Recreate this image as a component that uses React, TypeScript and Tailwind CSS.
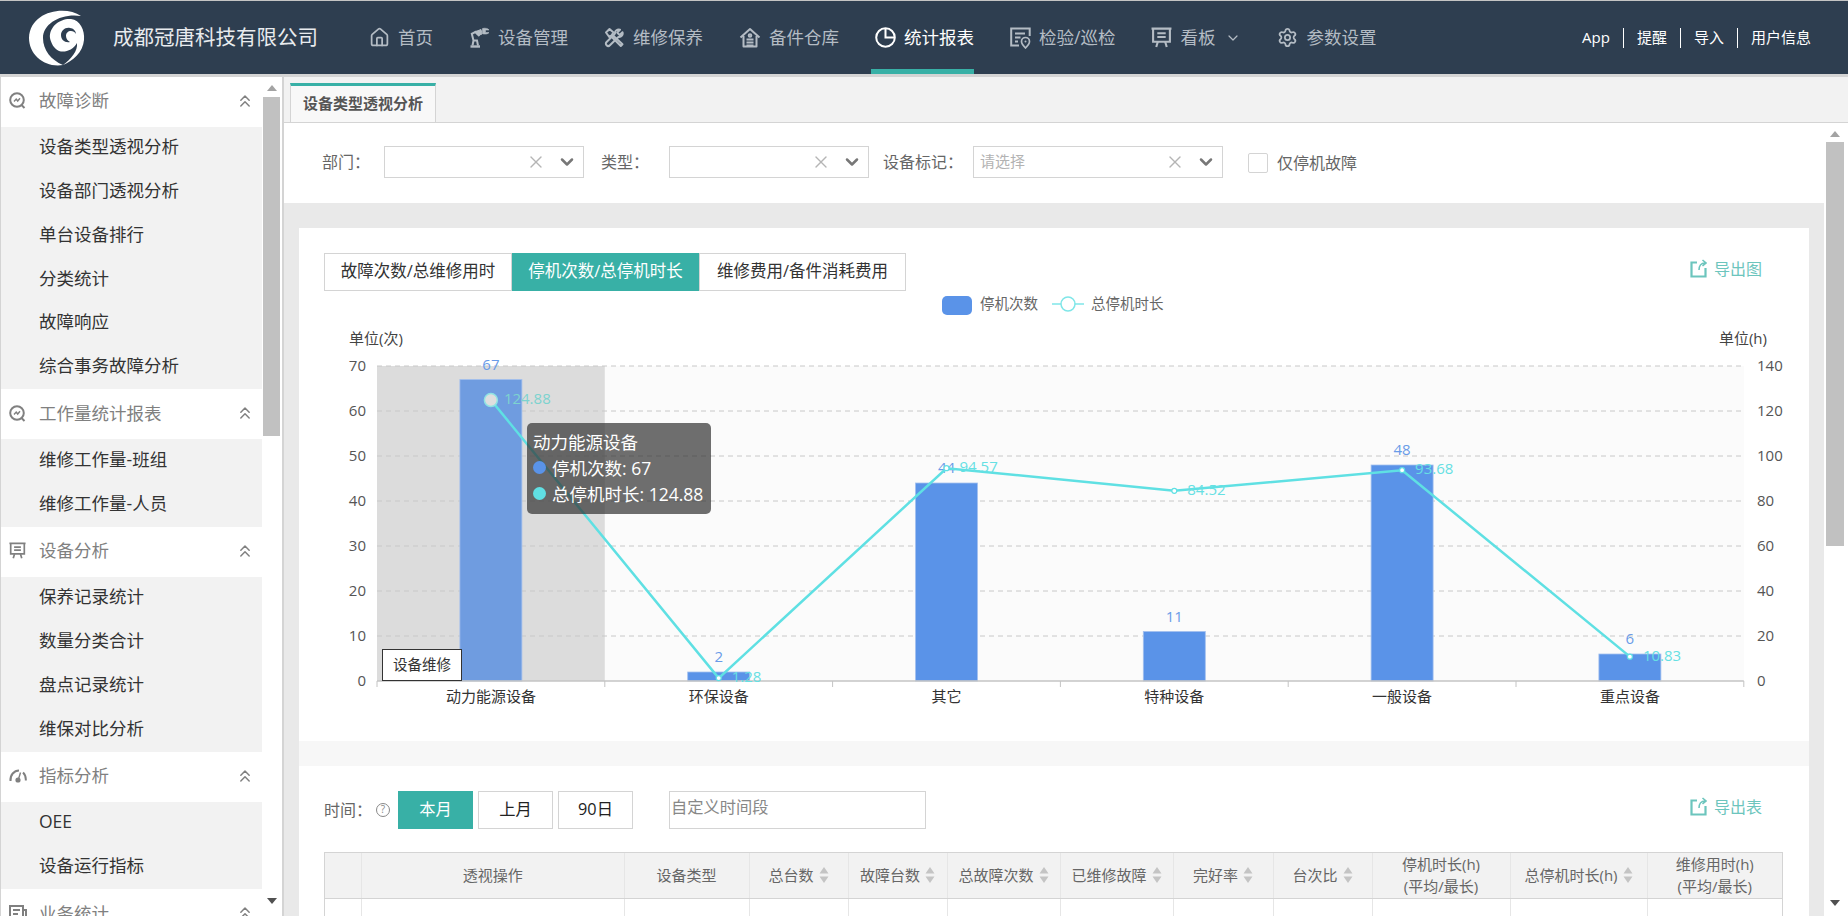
import React from 'react';
import { ChevronDown, ChevronsUp, Home, Settings, X } from 'lucide-react';

const RobotIcon = () => (
  <svg width="21" height="21" viewBox="0 0 21 21" fill="none" stroke="currentColor" strokeWidth="2">
    <path d="M1.500 19.500h9.500" strokeWidth="2.400" />
    <path d="M3.500 18.500l1-5h3.500l1 5M4.500 13.500 2.800 6.800l4-2L10.500 9" />
    <path d="M5.500 5 12 2.500l1 4.500-4 1.500z" fill="currentColor" strokeWidth="1" />
    <path d="M13.500 1.500c3-.8 6 .2 6.500 1.500h-3.500v2.500H20c-.6 1.400-4 2-6.500 1.300z" fill="currentColor" strokeWidth="0.600" />
  </svg>
);

const ToolsIcon = () => (
  <svg width="21" height="21" viewBox="0 0 21 21" fill="none" stroke="currentColor" strokeWidth="2" strokeLinejoin="round">
    <path d="M2 5.500 5.500 2l4 3.500L8 7.500l10.500 9.800-1.700 1.700L6.500 8.800l-1.200 1.200z" />
    <path d="M18.500 5.200 15.600 8l-2.400-2.400L16 2.800c-2.400-.9-5.500.8-5 3.800L2.600 15c-1 1-1 2.400 0 3.300.9.900 2.400.9 3.300 0l8.500-8.300c3 .5 4.900-2.400 4.100-4.800z" />
  </svg>
);

const WarehouseIcon = () => (
  <svg width="22" height="21" viewBox="0 0 22 21" fill="none" stroke="currentColor" strokeWidth="2" strokeLinejoin="round">
    <path d="M1.500 10.500 11 2l9.500 8.500" />
    <path d="M4.500 9v10.500h13V9" />
    <circle cx="11" cy="8.500" r="1.300" />
    <path d="M7.500 12.500h7M7.500 15.500h7M7.500 18.500h7" />
  </svg>
);

const PieIcon = () => (
  <svg width="21" height="21" viewBox="0 0 21 21" fill="none" stroke="currentColor" strokeWidth="2">
    <circle cx="10.500" cy="10.500" r="9.300" />
    <path d="M10.500 1.500v9h9" />
  </svg>
);

const InspectIcon = () => (
  <svg width="21" height="22" viewBox="0 0 21 22" fill="none" stroke="currentColor" strokeWidth="2">
    <path d="M9 18.500H1.200V1.500h18.500v7.500" />
    <path d="M5 6.500h10M5 10.500h5.500M5 14.500h3" />
    <path d="M15.500 10.500a4 4 0 0 1 4 4c0 2.500-4 6.500-4 6.500s-4-4-4-6.500a4 4 0 0 1 4-4z" strokeWidth="1.700" />
    <circle cx="15.500" cy="14.500" r="1" fill="currentColor" stroke="none" />
  </svg>
);

const BoardIcon = ({ size = 21 }: { size?: number }) => (
  <svg width={size} height={size} viewBox="0 0 20 20" fill="none" stroke="currentColor" strokeWidth="2">
    <path d="M.500 1.500h19M2 1.500v12.500h16V1.500" />
    <path d="M6 6h8M6 9.500h8" />
    <path d="M6.500 14 5 19M13.500 14l1.500 5" />
  </svg>
);

const TrendIcon = () => (
  <svg width="17" height="17" viewBox="0 0 17 17" fill="none" stroke="currentColor" strokeWidth="2">
    <circle cx="8" cy="8" r="6.800" />
    <path d="M5 9.500 7.200 7l1.500 2L11 6.200" strokeWidth="1.400" />
    <path d="M12.500 13 15.500 16" />
  </svg>
);

const GaugeIcon = () => (
  <svg width="18" height="17" viewBox="0 0 18 17" fill="none" stroke="currentColor" strokeWidth="2">
    <path d="M1.500 14C1 8 5 3.500 10 3.500" />
    <path d="M14 5.500c2 1.800 3 4.500 2.800 8" />
    <path d="M11.500 5.500 9.500 12" strokeWidth="1.400" />
    <circle cx="9" cy="13" r="1.600" fill="currentColor" />
  </svg>
);

const DocIcon = () => (
  <svg width="18" height="18" viewBox="0 0 18 18" fill="none" stroke="currentColor" strokeWidth="2">
    <path d="M1 2h13v13H1zM4 6h7M4 10h5" />
    <path d="M14 6h3v9" />
  </svg>
);

const LogoIcon = () => (
  <svg width="56" height="56" viewBox="8 8 56 56" fill="#ffffff">
    <path d="M60 14C44 3 9 9 8 36c0 17 16 30 34 27-12-5-20-15-20-27 0-15 19-25 38-22z" />
    <path d="M29 36C28 24 40 16 50 17c9 1 14 11 13 21-1 12-11 21-21 25 8-6 15-14 14-22-4 7-12 10-18 8-5-2-8-8-9-13z" />
    <path d="M49 26c-5-1-9 3-9 7 0 5 4 8 9 7-2-1-4-3-4-6 0-3 2-5 5-5 2 0 4 1 5 3 0-3-3-6-6-6z" fill="#2e3e50" />
  </svg>
);

const ExportIcon = () => (
  <svg width="17" height="19" viewBox="0 0 17 19" fill="none" stroke="#6cc5bd" strokeWidth="2.200">
    <path d="M7 3.500H1.500v14h14V9" />
    <path d="M9 11c0-4 2-7 6-7M12.500 1l3.500 3-3.500 3" strokeWidth="1.600" />
  </svg>
);

const SortIcon = () => (
  <svg width="10" height="18" viewBox="0 0 10 18" fill="#c4c4c4" className="ml-[5px] shrink-0">
    <path d="M5 1l4.500 6.500h-9zM5 17 .5 10.500h9z" />
  </svg>
);

const navItems = [
  { label: '首页', icon: <Home size={21} strokeWidth={2} /> },
  { label: '设备管理', icon: <RobotIcon /> },
  { label: '维修保养', icon: <ToolsIcon /> },
  { label: '备件仓库', icon: <WarehouseIcon /> },
  { label: '统计报表', icon: <PieIcon />, active: true },
  { label: '检验/巡检', icon: <InspectIcon /> },
  { label: '看板', icon: <BoardIcon />, caret: true },
  { label: '参数设置', icon: <Settings size={21} strokeWidth={2} /> },
];

const sideGroups = [
  { title: '故障诊断', icon: <TrendIcon />, items: ['设备类型透视分析', '设备部门透视分析', '单台设备排行', '分类统计', '故障响应', '综合事务故障分析'] },
  { title: '工作量统计报表', icon: <TrendIcon />, items: ['维修工作量-班组', '维修工作量-人员'] },
  { title: '设备分析', icon: <BoardIcon size={17} />, items: ['保养记录统计', '数量分类合计', '盘点记录统计', '维保对比分析'] },
  { title: '指标分析', icon: <GaugeIcon />, items: ['OEE', '设备运行指标'] },
  { title: '业务统计', icon: <DocIcon />, items: [] },
];

const Sidebar = () => (
  <aside className="flex w-[284px] shrink-0 border-l border-[#d4d4d4] bg-white">
    <div className="w-[261px] overflow-hidden">
      {sideGroups.map((group) => (
        <div key={group.title}>
          <div className="flex h-[50px] items-center bg-white pb-[2px] pl-2 pr-[7px] text-[#808080]">
            <span className="flex w-[30px] shrink-0">{group.icon}</span>
            <span className="text-[17.5px]">{group.title}</span>
            <ChevronsUp size={20} strokeWidth={1.8} className="ml-auto" />
          </div>
          {group.items.map((item) => (
            <div key={item} className="flex h-[43.75px] items-center bg-[#f2f2f2] pb-1 pl-[38px] text-[17.5px] text-[#333]">
              {item}
            </div>
          ))}
        </div>
      ))}
    </div>
    <div className="flex w-[22px] shrink-0 flex-col items-center border-r-2 border-[#d4d4d4] pr-px">
      <div className="mt-2 h-0 w-0 border-x-[5px] border-b-[6px] border-x-transparent border-b-[#a3a3a3]" />
      <div className="mt-[6px] h-[339px] w-[17px] bg-[#c1c1c1]" />
      <div className="mt-[462px] h-0 w-0 border-x-[5px] border-t-[6px] border-x-transparent border-t-[#505050]" />
    </div>
  </aside>
);

const SelectBox = ({ width, placeholder }: { width: string; placeholder?: string }) => (
  <div className={`flex h-8 items-center border-[1.5px] border-[#d4d4d4] pl-[6px] pr-[6px] ${width}`}>
    <span className="text-[15px] text-[#b3b3b3]">{placeholder}</span>
    <X size={20} strokeWidth={1.6} className="ml-auto mr-[11px] text-[#b5b5b5]" />
    <ChevronDown size={20} strokeWidth={3} className="text-[#777]" />
  </div>
);

const cats = ['动力能源设备', '环保设备', '其它', '特种设备', '一般设备', '重点设备'];
const counts = [67, 2, 44, 11, 48, 6];
const hours = [124.88, 1.28, 94.57, 84.52, 93.68, 10.83];
const catW = 227.8;
const left = 377;
const base = 681;
const cx = (i: number) => left + catW * (i + 0.5);
const hourY = (v: number) => base - v * 2.25;

const Chart = () => (
  <div className="relative h-[450px]">
    <svg width="1510" height="450" viewBox="299 291 1510 450" fontSize="15">
      <rect x="942" y="296" width="30" height="19" rx="5" fill="#5a93e8" />
      <text x="980" y="309" fill="#666" fontSize="14.500">停机次数</text>
      <path d="M1052 304h32" stroke="#7fe6e8" strokeWidth="1.500" />
      <circle cx="1068" cy="304" r="7" fill="#fff" stroke="#7fe6e8" strokeWidth="1.500" />
      <text x="1091" y="309" fill="#666" fontSize="14.500">总停机时长</text>

      <text x="349" y="344" fill="#444">单位(次)</text>
      <text x="1767" y="344" fill="#444" textAnchor="end">单位(h)</text>

      <rect x={left} y="366" width={catW * 6} height="315" fill="#fbfbfb" />
      <rect x={left} y="366" width={catW} height="315" fill="#dcdcdc" />
      {[0, 10, 20, 30, 40, 50, 60, 70].map((n) => {
        const y = base - n * 4.5;
        return (
          <g key={n}>
            {n > 0 && <line x1={left} x2={left + catW * 6} y1={y} y2={y} stroke="#c8c8c8" strokeDasharray="5 4" />}
            <text x="366" y={y + 5} fill="#555" textAnchor="end">{n}</text>
            <text x="1757" y={y + 5} fill="#555">{n * 2}</text>
          </g>
        );
      })}
      {counts.map((c, i) => (
        <g key={cats[i]}>
          <rect
            x={cx(i) - 31}
            y={base - c * 4.5}
            width="62"
            height={c * 4.5}
            fill={i === 0 ? '#6f9ce0' : '#5a93e8'}
            stroke="#a3c0ee"
            strokeWidth="0.800"
          />
          <text x={cx(i)} y={base - c * 4.5 - 10} fill="#6a9be8" textAnchor="middle">{c}</text>
        </g>
      ))}
      <line x1={left} x2={left + catW * 6} y1={base} y2={base} stroke="#c4c4c4" strokeWidth="1.500" />
      {[0, 1, 2, 3, 4, 5, 6].map((i) => (
        <line key={i} x1={left + catW * i} x2={left + catW * i} y1={base} y2={base + 6} stroke="#c4c4c4" />
      ))}
      {cats.map((c, i) => (
        <text key={c} x={cx(i)} y="702" fill="#333" textAnchor="middle">{c}</text>
      ))}
      <polyline points={hours.map((h, i) => `${cx(i)},${hourY(h)}`).join(' ')} fill="none" stroke="#5fe0e3" strokeWidth="2.500" />
      {hours.map((h, i) => (
        <g key={h}>
          {i === 0 ? (
            <circle cx={cx(i)} cy={hourY(h)} r="6.500" fill="#dedede" stroke="#8ee3e3" strokeWidth="1.500" />
          ) : (
            <circle cx={cx(i)} cy={hourY(h)} r="2.500" fill="#fff" stroke="#5fe0e3" strokeWidth="1.200" />
          )}
          <text x={cx(i) + 13} y={hourY(h) + 4} fill={i === 0 ? '#7dd3cf' : '#66e0e3'}>{h}</text>
        </g>
      ))}
    </svg>
    <div className="absolute left-[228px] top-[132px] h-[91px] w-[184px] rounded-[5px] bg-[#323232]/70 px-[6px] pt-[6px] text-[17.5px] leading-[26px] text-white">
      <div>动力能源设备</div>
      <div className="flex items-center gap-[6px]">
        <span className="h-[13px] w-[13px] rounded-full bg-[#5a93e8]" />
        停机次数: 67
      </div>
      <div className="flex items-center gap-[6px] whitespace-nowrap">
        <span className="h-[13px] w-[13px] rounded-full bg-[#60dfe3]" />
        总停机时长: 124.88
      </div>
    </div>
    <div className="absolute left-[83px] top-[358px] flex h-8 w-20 items-center justify-center border-[1.5px] border-[#333] bg-white text-[14.5px] text-[#333]">
      设备维修
    </div>
  </div>
);

const tableHead = [
  { label: '' },
  { label: '透视操作' },
  { label: '设备类型' },
  { label: '总台数', sort: true },
  { label: '故障台数', sort: true },
  { label: '总故障次数', sort: true },
  { label: '已维修故障', sort: true },
  { label: '完好率', sort: true },
  { label: '台次比', sort: true },
  { label: '停机时长(h)', sub: '(平均/最长)' },
  { label: '总停机时长(h)', sort: true },
  { label: '维修用时(h)', sub: '(平均/最长)' },
];

const ExportLink = ({ label }: { label: string }) => (
  <div className="flex items-center gap-[7px] text-base text-[#6cc5bd]">
    <ExportIcon />
    {label}
  </div>
);

const App = () => (
  <div className="flex h-[916px] w-[1848px] flex-col overflow-hidden border-t border-[#c4c4c4] bg-white font-['Open_Sans','Noto_Sans_CJK_SC',sans-serif]">
    <header className="flex h-[73px] shrink-0 items-center bg-[#2e3e50] pl-[29px] pr-[37px]">
      <LogoIcon />
      <div className="ml-7 mr-[51px] text-[20.5px] text-[#e8ebee]">成都冠唐科技有限公司</div>
      <nav className="flex h-full gap-9 text-[17.5px]">
        {navItems.map((item) => (
          <div key={item.label} className={`relative flex items-center gap-2 ${item.active ? 'text-white' : 'text-[#b4bcc4]'}`}>
            {item.icon}
            <span className="whitespace-nowrap">{item.label}</span>
            {item.caret && <ChevronDown size={16} strokeWidth={1.8} className="ml-0.5" />}
            {item.active && <div className="absolute -left-1 bottom-0 right-0 h-[5px] bg-[#38b0a6]" />}
          </div>
        ))}
      </nav>
      <div className="ml-auto flex items-center text-[15px] text-white">
        <span>App</span>
        <span className="mx-[13px] h-5 w-px bg-white" />
        <span>提醒</span>
        <span className="mx-[13px] h-5 w-px bg-white" />
        <span>导入</span>
        <span className="mx-[13px] h-5 w-px bg-white" />
        <span>用户信息</span>
      </div>
    </header>
    <div className="h-[2.5px] shrink-0 bg-[#d4d4d4]" />

    <div className="flex min-h-0 flex-1">
      <Sidebar />
      <main className="flex min-w-0 flex-1 flex-col">
        <div className="flex h-[46px] shrink-0 items-end border-b-[1.5px] border-[#d4d4d4] bg-[#f2f2f2] pl-[6px]">
          <div className="flex h-[39px] w-[146px] items-center justify-center border-x border-t-[3px] border-[#d4d4d4] border-t-[#38b0a6] bg-[#f8f8f8] text-[15px] font-semibold text-[#555]">
            设备类型透视分析
          </div>
        </div>

        <div className="flex min-h-0 flex-1">
          <div className="w-[1540px] shrink-0 overflow-hidden bg-[#e9e9e9]">
            <div className="flex h-20 items-center bg-white pb-[2px] pl-[38px] text-base text-[#666]">
              <span className="w-[62px]">部门：</span>
              <SelectBox width="w-[200px]" />
              <span className="ml-[17px] w-[68px]">类型：</span>
              <SelectBox width="w-[200px]" />
              <span className="ml-[14px] w-[90px]">设备标记：</span>
              <SelectBox width="w-[250px]" placeholder="请选择" />
              <span className="ml-[25px] mt-[2px] h-5 w-5 rounded-[2px] border-[1.5px] border-[#d4d4d4]" />
              <span className="ml-[9px] mt-[2px]">仅停机故障</span>
            </div>

            <div className="mx-[15px] mt-[25px] bg-white">
              <div className="flex items-center pl-[25px] pr-[47px] pt-[25px]">
                <div className="flex h-[38px] text-[16.5px]">
                  <div className="flex w-[188px] items-center justify-center border-[1.5px] border-[#d4d4d4] text-[#333]">故障次数/总维修用时</div>
                  <div className="flex w-[187px] items-center justify-center bg-[#38b0a6] text-white">停机次数/总停机时长</div>
                  <div className="flex w-[207px] items-center justify-center border-[1.5px] border-[#d4d4d4] text-[#333]">维修费用/备件消耗费用</div>
                </div>
                <div className="ml-auto -mt-[6px]"><ExportLink label="导出图" /></div>
              </div>
              <Chart />
            </div>

            <div className="mx-[15px] h-[25px] bg-[#f7f7f7]" />

            <div className="mx-[15px] h-[200px] bg-white px-[25px] pt-[25px]">
              <div className="flex items-center text-[#666]">
                <span className="w-[52px] text-base">时间：</span>
                <span className="flex h-[14px] w-[14px] items-center justify-center rounded-full border border-[#888] text-[10px] text-[#888]">?</span>
                <div className="ml-2 flex h-[38px] w-[75px] items-center justify-center bg-[#38b0a6] text-[16.25px] text-white">本月</div>
                <div className="ml-[5px] flex h-[38px] w-[75px] items-center justify-center border-[1.5px] border-[#d4d4d4] text-[16.25px] text-[#222]">上月</div>
                <div className="ml-[5px] flex h-[38px] w-[75px] items-center justify-center border-[1.5px] border-[#d4d4d4] text-[16.25px] text-[#222]">90日</div>
                <div className="ml-[36px] flex h-[38px] w-[257px] items-center border-[1.5px] border-[#d4d4d4] pb-1 pl-px text-[16.25px] text-[#888]">自定义时间段</div>
                <div className="ml-auto -mt-[6px] mr-[22px]"><ExportLink label="导出表" /></div>
              </div>
              <div className="mt-[23px] h-[200px] w-[1459px] border-x-[1.5px] border-t-[1.5px] border-[#d4d4d4] text-[15px] text-[#666]">
                <div className="grid h-[46px] grid-cols-[37px_262.5px_125px_99px_99px_113px_113px_100px_99px_138px_137px_1fr] border-b-[1.5px] border-[#d4d4d4] bg-[#f2f2f2]">
                  {tableHead.map((col, i) => (
                    <div key={i} className="flex items-center justify-center border-r border-[#e6e6e6] leading-[22px] last:border-r-0">
                      {col.sub ? (
                        <div className="text-center">
                          <div>{col.label}</div>
                          <div>{col.sub}</div>
                        </div>
                      ) : (
                        <span className="whitespace-nowrap">{col.label}</span>
                      )}
                      {col.sort && <SortIcon />}
                    </div>
                  ))}
                </div>
                <div className="grid h-[60px] grid-cols-[37px_262.5px_125px_99px_99px_113px_113px_100px_99px_138px_137px_1fr]">
                  {tableHead.map((_, i) => (
                    <div key={i} className="border-r border-[#e6e6e6] last:border-r-0" />
                  ))}
                </div>
              </div>
            </div>
          </div>

          <div className="flex w-6 shrink-0 flex-col items-center bg-white pl-[2px] pr-1">
            <div className="mt-[8px] h-0 w-0 border-x-[5px] border-b-[6px] border-x-transparent border-b-[#a3a3a3]" />
            <div className="mt-[5px] h-[404px] w-[18px] bg-[#c1c1c1]" />
            <div className="mt-[354px] h-0 w-0 border-x-[5px] border-t-[6px] border-x-transparent border-t-[#505050]" />
          </div>
        </div>
      </main>
    </div>
  </div>
);

export default App;
